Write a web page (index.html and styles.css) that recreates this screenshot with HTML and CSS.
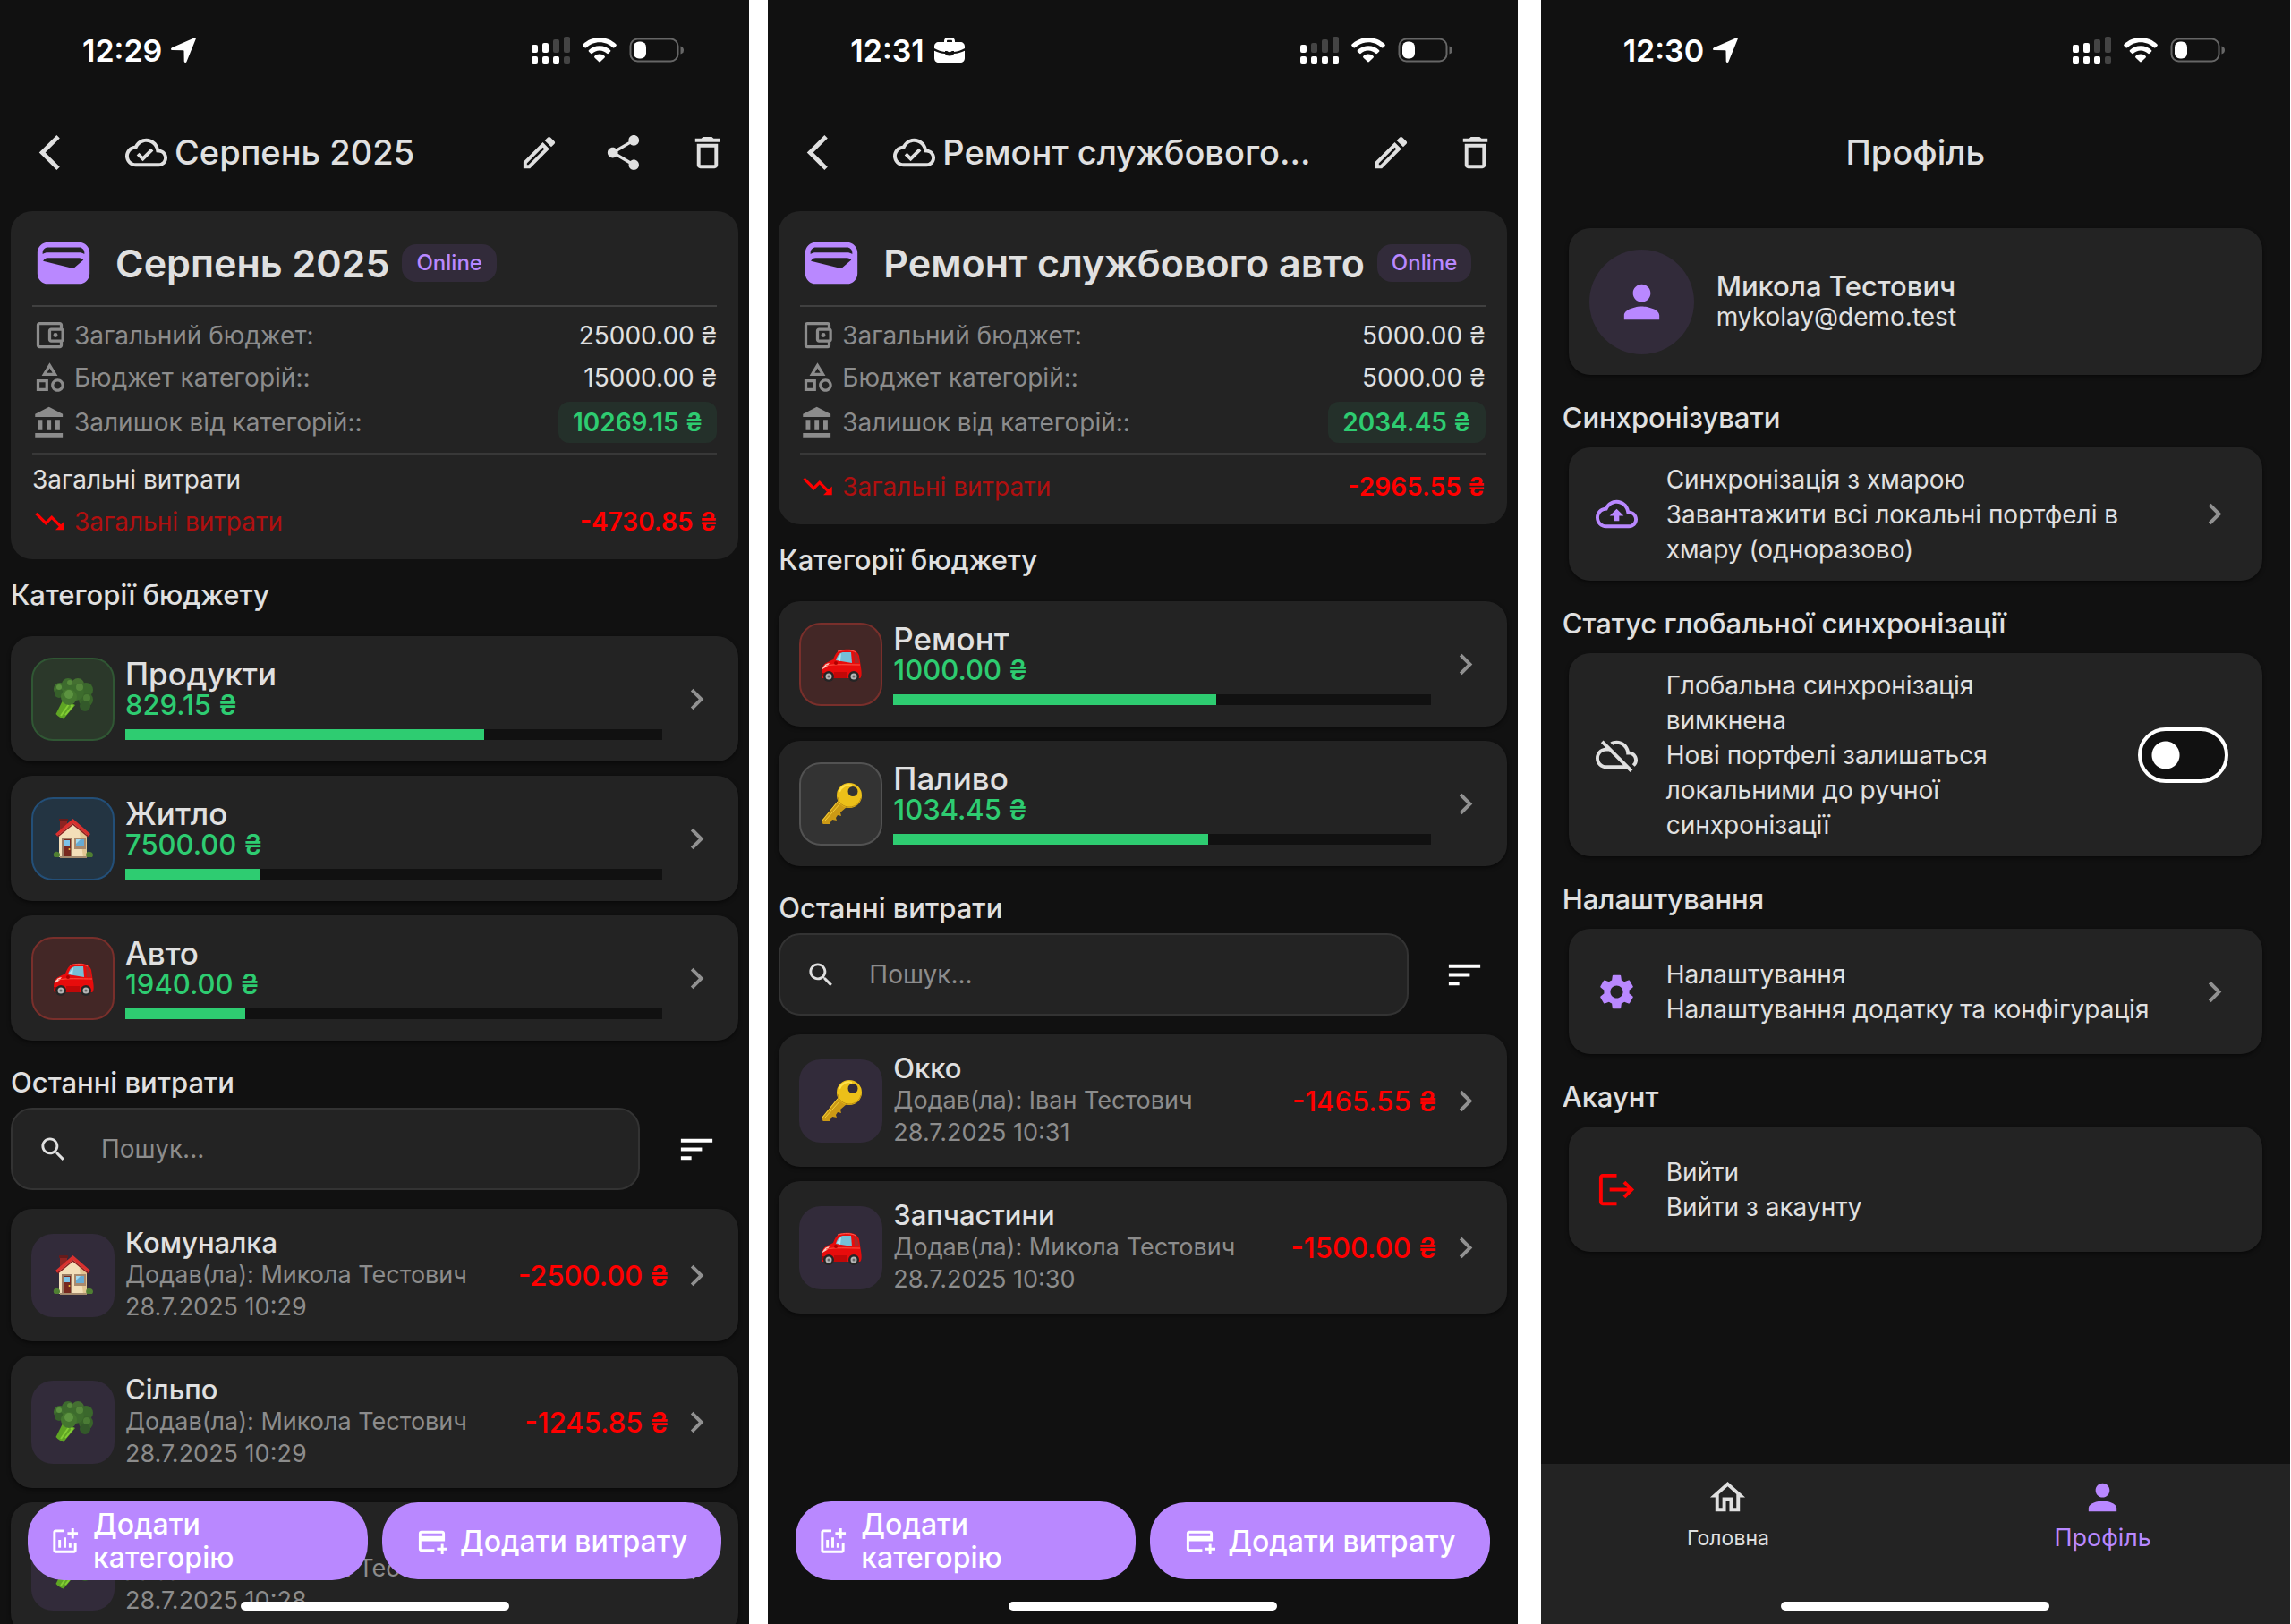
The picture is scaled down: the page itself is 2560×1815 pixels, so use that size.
FILE: index.html
```html
<!DOCTYPE html>
<html lang="uk">
  <head>
    <meta charset="utf-8">
    <title>Бюджет</title>
    <link rel="stylesheet" href="styles.css">
  </head>
  <body>
    <!-- icons -->
    <svg class="sprite" aria-hidden="true">
      <symbol id="i-location" viewBox="0 0 28 28"><path d="M26.300.3c1-.5 1.800.3 1.400 1.400L17.500 27c-.7 1.600-2.700 1.200-2.800-.5l-.2-11.200c0-.7-.3-1-1-1L1.600 14c-1.800-.1-2.200-2-.5-2.800z"/></symbol>
      <symbol id="i-briefcase" viewBox="0 0 34 28"><path d="M11 5V4c0-2.500 1.500-4 4-4h4c2.500 0 4 1.500 4 4v1h6c3 0 5 2 5 5v2c-4 2.500-8 3.600-12 4v-1h-2.500c-.5 1.500-4.500 1.500-5 0H12v1C8 15.600 4 14.500 0 12v-2c0-3 2-5 5-5zm3 0h6V4c0-.8-.4-1.200-1.200-1.200h-3.600c-.8 0-1.200.4-1.200 1.200zM0 14.800c4 2 8 3 12 3.300.8 1.800 2.500 2.500 5 2.500s4.200-.7 5-2.500c4-.3 8-1.300 12-3.300V23c0 3-2 5-5 5H5c-3 0-5-2-5-5z"/></symbol>
      <symbol id="i-wifi" viewBox="0 0 38 28"><path d="M19 0c7.300 0 13.800 2.900 18.500 7.500.5.500.5 1.200 0 1.700l-2 2c-.5.500-1.200.5-1.700 0C30 7.500 24.800 5.200 19 5.200S8 7.500 4.200 11.200c-.5.500-1.200.5-1.700 0l-2-2c-.5-.5-.5-1.200 0-1.700C5.200 2.900 11.700 0 19 0zm0 9.200c4.700 0 9 1.900 12 4.900.5.500.5 1.200 0 1.700l-2.100 2c-.5.500-1.200.5-1.700 0-2.100-2.100-5-3.400-8.200-3.400s-6.100 1.300-8.200 3.400c-.5.500-1.200.5-1.700 0l-2.100-2c-.5-.5-.5-1.200 0-1.700 3-3 7.300-4.900 12-4.900zm0 9.200c2.200 0 4.200.9 5.600 2.300.5.500.5 1.200 0 1.700l-4.700 4.700c-.5.500-1.300.5-1.800 0l-4.700-4.700c-.5-.5-.5-1.200 0-1.700 1.400-1.400 3.400-2.300 5.600-2.300z"/></symbol>
      <symbol id="i-battery" viewBox="0 0 62 28"><rect x="1.500" y="1.500" width="53" height="25" rx="8" fill="none" stroke="#666" stroke-width="2"/><rect x="5" y="4.500" width="14" height="19" rx="6"/><path d="M57.500 9.500c2.500.8 3.500 2.500 3.500 4.500s-1 3.700-3.500 4.500z" fill="#666"/></symbol>
      <symbol id="i-back" viewBox="0 0 24 24"><path d="M17.770 3.770L16 2 6 12l10 10 1.770-1.770L9.540 12z"/></symbol>
      <symbol id="i-chevron" viewBox="0 0 24 24"><path d="M10 6L8.590 7.410 13.170 12l-4.580 4.590L10 18l6-6z"/></symbol>
      <symbol id="i-cloud-done" viewBox="0 0 24 24"><path d="M19.350 10.040C18.670 6.590 15.640 4 12 4 9.110 4 6.610 5.640 5.360 8.040 2.350 8.360 0 10.900 0 14c0 3.310 2.690 6 6 6h13c2.760 0 5-2.240 5-5 0-2.640-2.050-4.780-4.650-4.960zM19 18H6c-2.210 0-4-1.790-4-4 0-2.050 1.530-3.760 3.560-3.970l1.070-.11.5-.95C8.080 7.140 9.940 6 12 6c2.620 0 4.880 1.860 5.390 4.430l.3 1.500 1.530.11c1.560.1 2.780 1.410 2.780 2.960 0 1.650-1.350 3-3 3zm-9-3.820l-2.090-2.090L6.500 13.500 10 17l6.010-6.010-1.410-1.410z"/></symbol>
      <symbol id="i-cloud-upload" viewBox="0 0 24 24"><path d="M19.350 10.040C18.670 6.590 15.640 4 12 4 9.110 4 6.610 5.640 5.360 8.040 2.350 8.360 0 10.900 0 14c0 3.310 2.690 6 6 6h13c2.760 0 5-2.240 5-5 0-2.640-2.050-4.780-4.650-4.960zM19 18H6c-2.210 0-4-1.790-4-4 0-2.050 1.530-3.760 3.560-3.970l1.070-.11.5-.95C8.080 7.140 9.940 6 12 6c2.620 0 4.880 1.860 5.390 4.430l.3 1.500 1.530.11c1.560.1 2.780 1.410 2.780 2.960 0 1.650-1.350 3-3 3zM8 13h2.550v3h2.900v-3H16l-4-4z"/></symbol>
      <symbol id="i-cloud-off" viewBox="0 0 24 24"><path d="M24 15c0-2.640-2.050-4.780-4.650-4.960C18.670 6.590 15.640 4 12 4c-1.330 0-2.570.36-3.650.97l1.490 1.490C10.510 6.170 11.230 6 12 6c3.040 0 5.500 2.460 5.500 5.500v.5H19c1.660 0 3 1.340 3 3 0 .99-.48 1.850-1.210 2.400l1.410 1.410c1.090-.92 1.800-2.270 1.800-3.810zM4.410 3.860L3 5.270l2.770 2.770h-.42C2.340 8.360 0 10.910 0 14c0 3.310 2.690 6 6 6h11.730l2 2 1.410-1.410L4.410 3.860zM6 18c-2.210 0-4-1.790-4-4s1.790-4 4-4h1.730l8 8H6z"/></symbol>
      <symbol id="i-edit" viewBox="0 0 24 24"><path d="M14.060 9.020l.92.92L5.920 19H5v-.92l9.060-9.060M17.660 3c-.25 0-.51.1-.7.29l-1.830 1.830 3.750 3.750 1.830-1.830c.39-.39.39-1.020 0-1.410l-2.340-2.340c-.2-.2-.45-.29-.71-.29zm-3.600 3.190L3 17.250V21h3.750L17.810 9.940l-3.750-3.750z"/></symbol>
      <symbol id="i-share" viewBox="0 0 24 24"><path d="M18 16.080c-.76 0-1.440.3-1.960.77L8.910 12.700c.05-.23.09-.46.09-.7s-.04-.47-.09-.7l7.050-4.110c.54.5 1.250.81 2.040.81 1.660 0 3-1.340 3-3s-1.340-3-3-3-3 1.340-3 3c0 .24.04.47.09.7L8.040 9.810C7.500 9.310 6.790 9 6 9c-1.660 0-3 1.340-3 3s1.340 3 3 3c.79 0 1.500-.31 2.040-.81l7.120 4.160c-.05.21-.08.43-.08.65 0 1.610 1.310 2.920 2.920 2.920s2.920-1.310 2.920-2.920-1.310-2.920-2.920-2.920z"/></symbol>
      <symbol id="i-delete" viewBox="0 0 24 24"><path d="M6 19c0 1.100.9 2 2 2h8c1.100 0 2-.9 2-2V7H6v12zM8 9h8v10H8V9zm7.500-5l-1-1h-5l-1 1H5v2h14V4z"/></symbol>
      <symbol id="i-wallet" viewBox="0 0 24 24"><path d="M18 4H6C3.790 4 2 5.790 2 8v8c0 2.210 1.790 4 4 4h12c2.210 0 4-1.790 4-4V8c0-2.210-1.790-4-4-4zm-1.860 9.770c-.24.2-.57.28-.88.2L4.150 11.250C4.450 10.520 5.160 10 6 10h12c.67 0 1.260.34 1.630.84l-3.490 2.930zM6 6h12c1.100 0 2 .9 2 2v.55c-.59-.34-1.270-.55-2-.55H6c-.73 0-1.410.21-2 .55V8c0-1.100.9-2 2-2z"/></symbol>
      <symbol id="i-budget" viewBox="0 0 24 24"><path d="M21 7.280V5c0-1.100-.9-2-2-2H5c-1.110 0-2 .9-2 2v14c0 1.100.89 2 2 2h14c1.100 0 2-.9 2-2v-2.280c.59-.35 1-.98 1-1.720V9c0-.74-.41-1.380-1-1.720zM20 9v6h-7V9h7zM5 19V5h14v2h-6c-1.100 0-2 .9-2 2v6c0 1.100.9 2 2 2h6v2H5z"/><circle cx="16" cy="12" r="1.500"/></symbol>
      <symbol id="i-category" viewBox="0 0 24 24"><path d="M12 2l-5.500 9h11L12 2zm0 3.840L13.930 9h-3.870L12 5.840zM17.500 13c-2.490 0-4.500 2.010-4.500 4.500s2.010 4.500 4.500 4.500 4.500-2.010 4.500-4.500-2.010-4.500-4.500-4.500zm0 7c-1.380 0-2.500-1.120-2.500-2.500s1.120-2.500 2.500-2.500 2.500 1.120 2.500 2.500-1.120 2.500-2.500 2.500zM3 21.500h8v-8H3v8zm2-6h4v4H5v-4z"/></symbol>
      <symbol id="i-bank" viewBox="0 0 24 24"><path d="M4 10v7h3v-7H4zm6 0v7h3v-7h-3zM2 22h19v-3H2v3zm14-12v7h3v-7h-3zm-4.500-9L2 6v2h19V6l-9.500-5z"/></symbol>
      <symbol id="i-trend" viewBox="0 0 24 24"><path d="M16 18l2.290-2.290-4.880-4.880-4 4L2 7.410 3.410 6l6 6 4-4 6.300 6.290L22 12v6z"/></symbol>
      <symbol id="i-search" viewBox="0 0 24 24"><path d="M15.500 14h-.79l-.28-.27C15.410 12.590 16 11.110 16 9.500 16 5.910 13.090 3 9.500 3S3 5.910 3 9.500 5.910 16 9.500 16c1.610 0 3.090-.59 4.230-1.570l.27.28v.79l5 4.990L20.490 19l-4.990-5zm-6 0C7.010 14 5 11.990 5 9.500S7.010 5 9.500 5 14 7.010 14 9.500 11.990 14 9.500 14z"/></symbol>
      <symbol id="i-sort" viewBox="0 0 24 24"><path d="M3 18h6v-2H3v2zM3 6v2h18V6H3zm0 7h12v-2H3v2z"/></symbol>
      <symbol id="i-addchart" viewBox="0 0 24 24"><path d="M22 5v2h-3v3h-2V7h-3V5h3V2h2v3h3zm-3 14H5V5h6V3H5c-1.100 0-2 .9-2 2v14c0 1.100.9 2 2 2h14c1.100 0 2-.9 2-2v-6h-2v6zm-4-6v4h2v-4h-2zm-4 4h2V9h-2v8zm-2 0v-6H7v6h2z"/></symbol>
      <symbol id="i-addcard" viewBox="0 0 24 24"><path d="M20 4H4C2.890 4 2.010 4.890 2.010 6L2 18c0 1.110.89 2 2 2h10v-2H4v-6h18V6c0-1.110-.89-2-2-2zm0 4H4V6h16v2zm4 9v2h-3v3h-2v-3h-3v-2h3v-3h2v3h3z"/></symbol>
      <symbol id="i-person" viewBox="0 0 24 24"><path d="M12 12c2.210 0 4-1.790 4-4s-1.790-4-4-4-4 1.790-4 4 1.790 4 4 4zm0 2c-2.670 0-8 1.340-8 4v2h16v-2c0-2.660-5.330-4-8-4z"/></symbol>
      <symbol id="i-settings" viewBox="0 0 24 24"><path d="M19.140 12.940c.04-.3.060-.61.060-.94 0-.32-.02-.64-.07-.94l2.030-1.580c.18-.14.23-.41.12-.61l-1.920-3.320c-.12-.22-.37-.29-.59-.22l-2.390.96c-.5-.38-1.030-.7-1.620-.94l-.36-2.540c-.04-.24-.24-.41-.48-.41h-3.840c-.24 0-.43.17-.47.41l-.36 2.540c-.59.24-1.130.57-1.620.94l-2.390-.96c-.22-.08-.47 0-.59.22L2.740 8.870c-.12.21-.08.47.12.61l2.030 1.580c-.05.3-.09.63-.09.94s.02.64.07.94l-2.030 1.580c-.18.14-.23.41-.12.61l1.920 3.320c.12.22.37.29.59.22l2.390-.96c.5.38 1.030.7 1.620.94l.36 2.540c.05.24.24.41.48.41h3.840c.24 0 .44-.17.47-.41l.36-2.540c.59-.24 1.130-.56 1.620-.94l2.390.96c.22.08.47 0 .59-.22l1.920-3.320c.12-.22.07-.47-.12-.61l-2.010-1.580zM12 15.600c-1.980 0-3.600-1.620-3.600-3.600s1.620-3.600 3.600-3.600 3.600 1.620 3.600 3.600-1.620 3.600-3.600 3.600z"/></symbol>
      <symbol id="i-logout" viewBox="0 0 24 24"><path d="M17 7l-1.410 1.410L18.170 11H8v2h10.170l-2.580 2.580L17 17l5-5zM4 5h8V3H4c-1.100 0-2 .9-2 2v14c0 1.100.9 2 2 2h8v-2H4V5z"/></symbol>
      <symbol id="i-home" viewBox="0 0 24 24"><path d="M12 5.690l5 4.500V18h-2v-6H9v6H7v-7.810l5-4.500M12 3L2 12h3v8h6v-6h2v6h6v-8h3L12 3z"/></symbol>

      <!-- category pictures -->
      <symbol id="p-broccoli" viewBox="0 0 46 46">
        <path d="M12 23l13 7-13 15.500c-3-.8-6-2.500-8.500-5.500z" fill="#5fa524"/>
        <path d="M14 27l4 2-9 13M20 30l2 1-8 10" fill="none" stroke="#83cc35" stroke-width="2"/>
        <circle cx="8" cy="12" r="7" fill="#40702f"/>
        <circle cx="17" cy="7" r="7" fill="#3d6b2e"/>
        <circle cx="28" cy="7" r="7" fill="#446f31"/>
        <circle cx="37" cy="13" r="8" fill="#3a672c"/>
        <circle cx="37" cy="24" r="8" fill="#38632a"/>
        <circle cx="36" cy="31" r="6" fill="#33592a"/>
        <circle cx="26" cy="16" r="9" fill="#3d6c2d"/>
        <circle cx="7" cy="17" r="5" fill="#36602a"/>
        <circle cx="18" cy="21" r="9" fill="#44762f"/>
        <circle cx="18" cy="18" r="5" fill="#5c9340"/>
        <circle cx="7" cy="10" r="3" fill="#5c9340"/>
        <circle cx="19" cy="5" r="3" fill="#568a3c"/>
        <circle cx="30" cy="10" r="4" fill="#54863b"/>
        <circle cx="38" cy="22" r="4" fill="#4a7b35"/>
      </symbol>
      <symbol id="p-house" viewBox="0 0 46 46">
        <path d="M8 2h8v12l-8 6z" fill="#8c2422"/><path d="M7 1h10v3H7z" fill="#651b1b"/>
        <path d="M7 17L22.500 3 38 17v27H7z" fill="#f3dfb9"/>
        <path d="M29 10l9 8v26h-4z" fill="#e2c794"/>
        <path d="M22.500 1L42 18l-2 2.500L22.500 6 5 20.500 3 18z" fill="#d9302e"/>
        <path d="M22.500 6L40 20.500l-1 1L22.500 8 6 21.500l-1-1z" fill="#8e1f20"/>
        <path d="M10 22h12v22H10z" fill="#9b7c63"/><path d="M12 24h8v19h-8z" fill="#78291f"/>
        <path d="M13 25h6v6h-6z" fill="#7cc4e8"/><circle cx="18.500" cy="35" r="1" fill="#f0c040"/>
        <path d="M24 22h13v13H24z" fill="#a98a6d"/><path d="M26 24h9v8h-9z" fill="#67abd3"/><path d="M26 24h5l-5 5z" fill="#a3daf0"/>
        <path d="M2 44c-3-3 0-7 3-6 3 0 4 4 2 6zm36 0c-2-3 0-7 3-6 4 0 5 4 3 6z" fill="#4f7f32"/>
        <path d="M8 43h30v2H8z" fill="#a58b6e"/>
      </symbol>
      <symbol id="p-car" viewBox="0 -5 46 46">
        <path d="M2 34c-2-6-1-14 4-17l8-4C17 5 20 2 26 2c9-1 15 1 17 7l2 13c1 6 1 11-1 12H4z" fill="#e80c0c"/>
        <path d="M17 14c2-7 5-9 9-9h8l1 12z" fill="#75bfd6"/><path d="M37 5c4 1 5 6 6 12h-5z" fill="#a92a2a"/>
        <path d="M18 13l5-7-1 9z" fill="#b4e4ee"/>
        <path d="M19 4c7-2 16-2 20 1" fill="none" stroke="#ff6355" stroke-width="1"/>
        <path d="M2 23c2-4 5-6 8-6l-3 4-5 3z" fill="#f7d0c4"/>
        <path d="M6 20c9-2 26-1 38-1" fill="none" stroke="#ff5544" stroke-width="1"/>
        <path d="M15 27h15v7H15z" fill="#c10808"/><path d="M1 28h7v4H2z" fill="#9d0808"/>
        <circle cx="17" cy="17" r="2" fill="#b00000"/>
        <circle cx="9" cy="32" r="6" fill="#252525"/><circle cx="9" cy="32" r="3.500" fill="#b5b5b5"/><circle cx="9" cy="32" r="1.500" fill="#666"/>
        <circle cx="37" cy="32" r="6" fill="#252525"/><circle cx="37" cy="32" r="3.500" fill="#b5b5b5"/><circle cx="37" cy="32" r="1.500" fill="#666"/>
      </symbol>
      <symbol id="p-key" viewBox="0 0 46 46">
        <path d="M20 19l9 8-7 6 1 4-4-1-2 3 1 3-5-1-2 3 0 2-8 1-2-5z" fill="#cc9a15"/>
        <path d="M19 21L2 42M22 23L5 42" fill="none" stroke="#f3ce3a" stroke-width="1"/>
        <path fill-rule="evenodd" d="M32 0a14 14 0 1 1 0 28 14 14 0 0 1 0-28zm4 4a5.500 5.500 0 1 0 0 11 5.500 5.500 0 0 0 0-11z" fill="#ecc019"/>
        <path d="M19 16c1 7 7 11 13 11 7 0 12-5 13-10" fill="none" stroke="#b98a12" stroke-width="1"/>
        <path d="M21 10c2-6 8-9 14-7" fill="none" stroke="#ffe04a" stroke-width="2"/>
      </symbol>
    </svg>

    <main class="screens">
      <!-- wallet: month -->
      <section class="phone">
        <div class="statusbar">
          <span class="time">12:29</span>
          <svg class="ic-loc"><use href="#i-location"/></svg>
          <div class="status-right">
            <svg class="ic-signal" viewBox="0 0 43 30"><g class="off"><rect x="24" y="3" width="7" height="15" rx="2"/><rect x="36" width="7" height="18" rx="2"/><rect x="36" y="22" width="7" height="8" rx="2"/></g><rect y="9" width="7" height="9" rx="2"/><rect x="12" y="7" width="7" height="11" rx="2"/><rect y="22" width="7" height="8" rx="2"/><rect x="12" y="22" width="7" height="8" rx="2"/><rect x="24" y="22" width="7" height="8" rx="2"/></svg>
            <svg class="ic-wifi"><use href="#i-wifi"/></svg>
            <svg class="ic-battery"><use href="#i-battery"/></svg>
          </div>
        </div>
        <header class="appbar">
          <button class="iconbtn back" aria-label="Назад"><svg class="icon"><use href="#i-back"/></svg></button>
          <h1 class="bar-title"><svg class="icon"><use href="#i-cloud-done"/></svg>Серпень 2025</h1>
          <button class="iconbtn" aria-label="Редагувати"><svg class="icon"><use href="#i-edit"/></svg></button>
          <button class="iconbtn" aria-label="Поділитися"><svg class="icon"><use href="#i-share"/></svg></button>
          <button class="iconbtn" aria-label="Видалити"><svg class="icon"><use href="#i-delete"/></svg></button>
        </header>

        <div class="content">
          <div class="summary">
            <div class="summary-head">
              <svg class="wallet-icon"><use href="#i-wallet"/></svg>
              <h2>Серпень 2025</h2>
              <span class="badge">Online</span>
            </div>
            <div class="rows">
              <div class="row"><svg class="icon-s"><use href="#i-budget"/></svg><span class="label">Загальний бюджет:</span><span>25000.00 ₴</span></div>
              <div class="row"><svg class="icon-s"><use href="#i-category"/></svg><span class="label">Бюджет категорій::</span><span>15000.00 ₴</span></div>
              <div class="row rest"><svg class="icon-s"><use href="#i-bank"/></svg><span class="label">Залишок від категорій::</span><span class="chip">10269.15 ₴</span></div>
            </div>
            <div class="spent with-caption">
              <p class="caption">Загальні витрати</p>
              <div class="row red"><svg class="icon-s"><use href="#i-trend"/></svg><span class="label">Загальні витрати</span><b>-4730.85 ₴</b></div>
            </div>
          </div>

          <h3 class="section">Категорії бюджету</h3>
          <div class="categories">
            <a href="#" class="card category">
              <span class="tile green"><svg><use href="#p-broccoli"/></svg></span>
              <span class="info"><span class="name">Продукти</span><span class="left">829.15 ₴</span><span class="bar"><span class="fill" style="width: 66.8%"></span></span></span>
              <svg class="icon chev"><use href="#i-chevron"/></svg>
            </a>
            <a href="#" class="card category">
              <span class="tile blue"><svg><use href="#p-house"/></svg></span>
              <span class="info"><span class="name">Житло</span><span class="left">7500.00 ₴</span><span class="bar"><span class="fill" style="width: 25%"></span></span></span>
              <svg class="icon chev"><use href="#i-chevron"/></svg>
            </a>
            <a href="#" class="card category">
              <span class="tile maroon"><svg><use href="#p-car"/></svg></span>
              <span class="info"><span class="name">Авто</span><span class="left">1940.00 ₴</span><span class="bar"><span class="fill" style="width: 22.4%"></span></span></span>
              <svg class="icon chev"><use href="#i-chevron"/></svg>
            </a>
          </div>

          <h3 class="section recent">Останні витрати</h3>
          <div class="searchrow">
            <label class="search"><svg><use href="#i-search"/></svg><input type="text" placeholder="Пошук..." aria-label="Пошук"></label>
            <button class="iconbtn sort" aria-label="Сортувати"><svg class="icon"><use href="#i-sort"/></svg></button>
          </div>
          <div class="expenses">
            <a href="#" class="card expense">
              <span class="tile"><svg><use href="#p-house"/></svg></span>
              <span class="info"><span class="name">Комуналка</span><span class="meta">Додав(ла): Микола Тестович</span><span class="meta">28.7.2025 10:29</span></span>
              <span class="amount">-2500.00 ₴</span>
              <svg class="icon chev"><use href="#i-chevron"/></svg>
            </a>
            <a href="#" class="card expense">
              <span class="tile"><svg><use href="#p-broccoli"/></svg></span>
              <span class="info"><span class="name">Сільпо</span><span class="meta">Додав(ла): Микола Тестович</span><span class="meta">28.7.2025 10:29</span></span>
              <span class="amount">-1245.85 ₴</span>
              <svg class="icon chev"><use href="#i-chevron"/></svg>
            </a>
            <a href="#" class="card expense">
              <span class="tile"><svg><use href="#p-broccoli"/></svg></span>
              <span class="info"><span class="name">&nbsp;</span><span class="meta">Додав(ла): Микола Тестович</span><span class="meta">28.7.2025 10:28</span></span>
              <svg class="icon chev"><use href="#i-chevron"/></svg>
            </a>
          </div>
        </div>

        <div class="actions">
          <button class="fab wide"><svg><use href="#i-addchart"/></svg><span>Додати категорію</span></button>
          <button class="fab"><svg><use href="#i-addcard"/></svg><span>Додати витрату</span></button>
        </div>
        <div class="home-line"></div>
      </section>

      <!-- wallet: car repair -->
      <section class="phone">
        <div class="statusbar">
          <span class="time">12:31</span>
          <svg class="ic-case"><use href="#i-briefcase"/></svg>
          <div class="status-right">
            <svg class="ic-signal" viewBox="0 0 43 30"><g class="off"><rect x="12" y="7" width="7" height="11" rx="2"/><rect x="24" y="3" width="7" height="15" rx="2"/><rect x="36" width="7" height="18" rx="2"/></g><rect y="9" width="7" height="9" rx="2"/><rect y="22" width="7" height="8" rx="2"/><rect x="12" y="22" width="7" height="8" rx="2"/><rect x="24" y="22" width="7" height="8" rx="2"/><rect x="36" y="22" width="7" height="8" rx="2"/></svg>
            <svg class="ic-wifi"><use href="#i-wifi"/></svg>
            <svg class="ic-battery"><use href="#i-battery"/></svg>
          </div>
        </div>
        <header class="appbar">
          <button class="iconbtn back" aria-label="Назад"><svg class="icon"><use href="#i-back"/></svg></button>
          <h1 class="bar-title"><svg class="icon"><use href="#i-cloud-done"/></svg>Ремонт службового...</h1>
          <button class="iconbtn" aria-label="Редагувати"><svg class="icon"><use href="#i-edit"/></svg></button>
          <button class="iconbtn" aria-label="Видалити"><svg class="icon"><use href="#i-delete"/></svg></button>
        </header>

        <div class="content">
          <div class="summary">
            <div class="summary-head">
              <svg class="wallet-icon"><use href="#i-wallet"/></svg>
              <h2>Ремонт службового авто</h2>
              <span class="badge">Online</span>
            </div>
            <div class="rows">
              <div class="row"><svg class="icon-s"><use href="#i-budget"/></svg><span class="label">Загальний бюджет:</span><span>5000.00 ₴</span></div>
              <div class="row"><svg class="icon-s"><use href="#i-category"/></svg><span class="label">Бюджет категорій::</span><span>5000.00 ₴</span></div>
              <div class="row rest"><svg class="icon-s"><use href="#i-bank"/></svg><span class="label">Залишок від категорій::</span><span class="chip">2034.45 ₴</span></div>
            </div>
            <div class="spent">
              <div class="row red"><svg class="icon-s"><use href="#i-trend"/></svg><span class="label">Загальні витрати</span><b>-2965.55 ₴</b></div>
            </div>
          </div>

          <h3 class="section">Категорії бюджету</h3>
          <div class="categories">
            <a href="#" class="card category">
              <span class="tile maroon"><svg><use href="#p-car"/></svg></span>
              <span class="info"><span class="name">Ремонт</span><span class="left">1000.00 ₴</span><span class="bar"><span class="fill" style="width: 60%"></span></span></span>
              <svg class="icon chev"><use href="#i-chevron"/></svg>
            </a>
            <a href="#" class="card category">
              <span class="tile grey"><svg><use href="#p-key"/></svg></span>
              <span class="info"><span class="name">Паливо</span><span class="left">1034.45 ₴</span><span class="bar"><span class="fill" style="width: 58.6%"></span></span></span>
              <svg class="icon chev"><use href="#i-chevron"/></svg>
            </a>
          </div>

          <h3 class="section recent">Останні витрати</h3>
          <div class="searchrow">
            <label class="search"><svg><use href="#i-search"/></svg><input type="text" placeholder="Пошук..." aria-label="Пошук"></label>
            <button class="iconbtn sort" aria-label="Сортувати"><svg class="icon"><use href="#i-sort"/></svg></button>
          </div>
          <div class="expenses">
            <a href="#" class="card expense">
              <span class="tile"><svg><use href="#p-key"/></svg></span>
              <span class="info"><span class="name">Окко</span><span class="meta">Додав(ла): Іван Тестович</span><span class="meta">28.7.2025 10:31</span></span>
              <span class="amount">-1465.55 ₴</span>
              <svg class="icon chev"><use href="#i-chevron"/></svg>
            </a>
            <a href="#" class="card expense">
              <span class="tile"><svg><use href="#p-car"/></svg></span>
              <span class="info"><span class="name">Запчастини</span><span class="meta">Додав(ла): Микола Тестович</span><span class="meta">28.7.2025 10:30</span></span>
              <span class="amount">-1500.00 ₴</span>
              <svg class="icon chev"><use href="#i-chevron"/></svg>
            </a>
          </div>
        </div>

        <div class="actions">
          <button class="fab wide"><svg><use href="#i-addchart"/></svg><span>Додати категорію</span></button>
          <button class="fab"><svg><use href="#i-addcard"/></svg><span>Додати витрату</span></button>
        </div>
        <div class="home-line"></div>
      </section>

      <!-- profile -->
      <section class="phone">
        <div class="statusbar">
          <span class="time">12:30</span>
          <svg class="ic-loc"><use href="#i-location"/></svg>
          <div class="status-right">
            <svg class="ic-signal" viewBox="0 0 43 30"><g class="off"><rect x="24" y="3" width="7" height="15" rx="2"/><rect x="36" width="7" height="18" rx="2"/><rect x="36" y="22" width="7" height="8" rx="2"/></g><rect y="9" width="7" height="9" rx="2"/><rect x="12" y="7" width="7" height="11" rx="2"/><rect y="22" width="7" height="8" rx="2"/><rect x="12" y="22" width="7" height="8" rx="2"/><rect x="24" y="22" width="7" height="8" rx="2"/></svg>
            <svg class="ic-wifi"><use href="#i-wifi"/></svg>
            <svg class="ic-battery"><use href="#i-battery"/></svg>
          </div>
        </div>
        <header class="appbar centered">
          <h1 class="bar-title">Профіль</h1>
        </header>

        <div class="content profile">
          <div class="card user">
            <span class="avatar"><svg><use href="#i-person"/></svg></span>
            <div>
              <p class="username">Микола Тестович</p>
              <p class="email">mykolay@demo.test</p>
            </div>
          </div>

          <h3 class="section">Синхронізувати</h3>
          <a href="#" class="card option">
            <svg class="icon purple"><use href="#i-cloud-upload"/></svg>
            <span class="text"><span>Синхронізація з хмарою</span><span>Завантажити всі локальні портфелі в хмару (одноразово)</span></span>
            <svg class="icon chev"><use href="#i-chevron"/></svg>
          </a>

          <h3 class="section">Статус глобальної синхронізації</h3>
          <div class="card option">
            <svg class="icon"><use href="#i-cloud-off"/></svg>
            <label class="text" for="sync"><span>Глобальна синхронізація вимкнена</span><span>Нові портфелі залишаться локальними до ручної синхронізації</span></label>
            <input type="checkbox" id="sync" class="switch">
          </div>

          <h3 class="section">Налаштування</h3>
          <a href="#" class="card option">
            <svg class="icon purple"><use href="#i-settings"/></svg>
            <span class="text"><span>Налаштування</span><span>Налаштування додатку та конфігурація</span></span>
            <svg class="icon chev"><use href="#i-chevron"/></svg>
          </a>

          <h3 class="section">Акаунт</h3>
          <a href="#" class="card option">
            <svg class="icon logout"><use href="#i-logout"/></svg>
            <span class="text"><span>Вийти</span><span>Вийти з акаунту</span></span>
          </a>
        </div>

        <nav class="tabs">
          <a href="#"><svg class="icon"><use href="#i-home"/></svg>Головна</a>
          <a href="#" class="active"><svg class="icon"><use href="#i-person"/></svg>Профіль</a>
        </nav>
        <div class="home-line"></div>
      </section>
    </main>
  </body>
</html>
```

FILE: styles.css
```css
* {
  box-sizing: border-box;
}

body {
  margin: 0;
  background-color: #ffffff;
  color: #e0e0e0;
  font-family: Inter, "Liberation Sans", sans-serif;
  font-size: 28px;
}

h1,
h2,
h3,
p {
  margin: 0;
}

a {
  color: inherit;
  text-decoration: none;
}

button,
input {
  font-family: inherit;
  color: inherit;
  margin: 0;
}

svg {
  display: block;
  flex-shrink: 0;
  fill: currentColor;
}

.sprite {
  position: absolute;
  width: 0;
  height: 0;
}

.screens {
  display: flex;
  height: 100vh;
  padding-right: 1px;
}

.phone {
  flex: 1;
  min-width: 0;
  position: relative;
  display: flex;
  flex-direction: column;
  overflow: hidden;
  background-color: #111111;
}

.phone:nth-child(2) {
  margin-left: 21px;
  margin-right: 26px;
}

.icon {
  width: 47px;
  height: 47px;
}

.icon-s {
  width: 39px;
  height: 39px;
}

/* status bar */
.statusbar {
  flex-shrink: 0;
  display: flex;
  align-items: center;
  height: 112px;
  padding: 0 72px 0 92px;
  color: #ffffff;
}

.time {
  font-size: 34px;
  font-weight: 600;
}

.ic-loc {
  width: 28px;
  height: 28px;
  margin-left: 10px;
}

.ic-case {
  width: 34px;
  height: 28px;
  margin-left: 11px;
}

.status-right {
  display: flex;
  align-items: center;
  gap: 14px;
  margin-left: auto;
}

.ic-signal {
  width: 43px;
  height: 30px;
}

.ic-signal .off {
  fill: #444444;
}

.ic-wifi {
  width: 38px;
  height: 28px;
}

.ic-battery {
  width: 62px;
  height: 28px;
}

/* app bar */
.appbar {
  flex-shrink: 0;
  display: flex;
  align-items: center;
  height: 116px;
}

.appbar.centered {
  justify-content: center;
}

.iconbtn {
  display: flex;
  align-items: center;
  justify-content: center;
  flex-shrink: 0;
  width: 94px;
  height: 94px;
  padding: 0;
  border: 0;
  background: none;
}

.back {
  margin-left: 8px;
  margin-right: 38px;
}

.bar-title {
  display: flex;
  align-items: center;
  gap: 8px;
  font-size: 38px;
  font-weight: 500;
  white-space: nowrap;
}

.back + .bar-title {
  flex: 1;
  min-width: 0;
}

/* content */
.content {
  flex: 1;
  min-height: 0;
  padding: 8px 12px 0;
}

.section {
  margin: 21px 0 27px;
  font-size: 31px;
  line-height: 38px;
  font-weight: 500;
}

.section.recent {
  margin: 28px 0 8px;
}

.summary {
  padding: 0 24px 19px;
  border-radius: 24px;
  background-color: #232323;
}

.summary-head {
  display: flex;
  align-items: center;
  padding: 23px 0 12px;
  border-bottom: 2px solid #404040;
}

.summary-head h2 {
  margin: 0 14px 0 23px;
  font-size: 43px;
  line-height: 52px;
  font-weight: 600;
  white-space: nowrap;
}

.wallet-icon {
  width: 70px;
  height: 70px;
  color: #b988ff;
}

.badge {
  padding: 0 16px;
  border-radius: 16px;
  background-color: #322b3a;
  color: #b988ff;
  font-size: 24px;
  line-height: 42px;
  font-weight: 500;
}

.rows {
  padding: 8px 0 7px;
  border-bottom: 2px solid #383838;
}

.row {
  display: flex;
  align-items: center;
  gap: 8px;
  height: 47px;
}

.row .icon-s,
.label {
  color: #8c8c8c;
}

.label {
  flex: 1;
}

.row.rest {
  height: 54px;
}

.chip {
  padding: 0 16px;
  border-radius: 12px;
  background-color: #24302a;
  color: #2ecc71;
  font-size: 28px;
  line-height: 46px;
  font-weight: 600;
}

.spent {
  padding-top: 12px;
}

.spent.with-caption {
  padding-top: 5px;
}

.caption {
  line-height: 46px;
}

.row.red,
.row.red .icon-s {
  color: #ff0000;
}

.row.red .label {
  color: #b01010;
}

.row b {
  font-weight: 600;
}

.card {
  display: flex;
  align-items: center;
  border-radius: 24px;
  background-color: #232323;
  box-shadow: 0 2px 4px rgba(0, 0, 0, 0.5);
}

.chev {
  color: #919191;
}

.tile {
  display: flex;
  align-items: center;
  justify-content: center;
  width: 93px;
  height: 93px;
  border-radius: 24px;
  background-color: #322b3a;
}

.tile svg {
  width: 46px;
  height: 46px;
}

.tile.green {
  background-color: #2b382a;
  border: 2px solid #305734;
}

.tile.blue {
  background-color: #233442;
  border: 2px solid #234f78;
}

.tile.maroon {
  background-color: #432726;
  border: 2px solid #792f2b;
}

.tile.grey {
  background-color: #333333;
  border: 2px solid #525252;
}

.info {
  flex: 1;
  display: flex;
  flex-direction: column;
  margin-left: 12px;
}

.categories {
  display: grid;
  gap: 16px;
}

.category {
  height: 140px;
  padding: 0 23px;
}

.category .info {
  margin-right: 15px;
}

.category .name {
  font-size: 35px;
  line-height: 36px;
  font-weight: 500;
}

.left {
  color: #2ecc71;
  font-size: 31px;
  line-height: 34px;
  font-weight: 500;
}

.bar {
  height: 12px;
  margin-top: 10px;
  background-color: #111111;
}

.fill {
  display: block;
  height: 100%;
  background-color: #2ecc71;
}

/* search */
.searchrow {
  display: flex;
  align-items: center;
  gap: 16px;
  margin-bottom: 20px;
}

.search {
  flex: 1;
  display: flex;
  align-items: center;
  gap: 24px;
  height: 92px;
  padding: 0 28px;
  border: 2px solid #333333;
  border-radius: 24px;
  background-color: #232323;
}

.search svg {
  width: 35px;
  height: 35px;
}

.search input {
  flex: 1;
  min-width: 0;
  padding: 0 12px;
  border: 0;
  outline: 0;
  background: none;
  font-size: 28px;
}

.search input::placeholder {
  color: #8c8c8c;
  opacity: 1;
}

.sort {
  color: #ffffff;
}

.expenses {
  display: grid;
  gap: 16px;
}

.expense {
  height: 148px;
  padding: 0 23px;
}

.expense .name {
  font-size: 31px;
  line-height: 36px;
  font-weight: 500;
}

.meta {
  color: #8c8c8c;
  font-size: 27px;
  line-height: 36px;
}

.amount {
  margin-right: 8px;
  color: #ff0000;
  font-size: 31px;
  font-weight: 500;
}

/* floating buttons */
.actions {
  position: absolute;
  left: 31px;
  right: 31px;
  bottom: 49px;
  display: grid;
  grid-template-columns: 1fr 1fr;
  align-items: center;
  gap: 16px;
}

.fab {
  display: flex;
  align-items: center;
  justify-content: center;
  gap: 14px;
  min-height: 86px;
  padding: 7px 24px;
  border: 0;
  border-radius: 40px;
  background-color: #b988ff;
  color: #ffffff;
  font-size: 32px;
  line-height: 37px;
  font-weight: 500;
  text-align: left;
}

.fab svg {
  width: 35px;
  height: 35px;
}

.fab.wide {
  justify-content: flex-start;
  padding-right: 32px;
}

.home-line {
  position: absolute;
  left: 50%;
  bottom: 15px;
  width: 300px;
  height: 10px;
  margin-left: -150px;
  border-radius: 5px;
  background-color: #ffffff;
}

/* profile */
.content.profile {
  padding: 27px 24px 0;
}

.profile .card {
  margin: 0 7px;
}

.profile .section {
  margin: 29px 0 14px;
}

.user {
  gap: 25px;
  height: 164px;
  padding: 0 23px;
}

.avatar {
  display: flex;
  align-items: center;
  justify-content: center;
  width: 117px;
  height: 117px;
  border-radius: 50%;
  background-color: #322b3a;
  color: #b988ff;
}

.avatar svg {
  width: 59px;
  height: 59px;
}

.username {
  font-size: 31px;
  line-height: 35px;
  font-weight: 500;
}

.email {
  line-height: 35px;
}

.option {
  min-height: 140px;
  padding: 15px 30px;
}

.option .text {
  flex: 1;
  margin: 2px 16px 0 32px;
  line-height: 39px;
}

.option .text span {
  display: block;
}

.purple {
  color: #b988ff;
}

.logout {
  color: #ff0000;
}

.switch {
  appearance: none;
  flex-shrink: 0;
  width: 101px;
  height: 62px;
  margin-left: 32px;
  margin-right: 8px;
  border: 4px solid #ffffff;
  border-radius: 31px;
  background: radial-gradient(circle at 27px 27px, #ffffff 15px, #111111 16px);
}

.tabs {
  flex-shrink: 0;
  display: flex;
  height: 179px;
  padding-top: 14px;
  background-color: #232323;
}

.tabs a {
  flex: 1;
  display: flex;
  flex-direction: column;
  align-items: center;
  gap: 5px;
  font-size: 23px;
  line-height: 34px;
}

.tabs .active {
  color: #b988ff;
  font-size: 27px;
}
```
